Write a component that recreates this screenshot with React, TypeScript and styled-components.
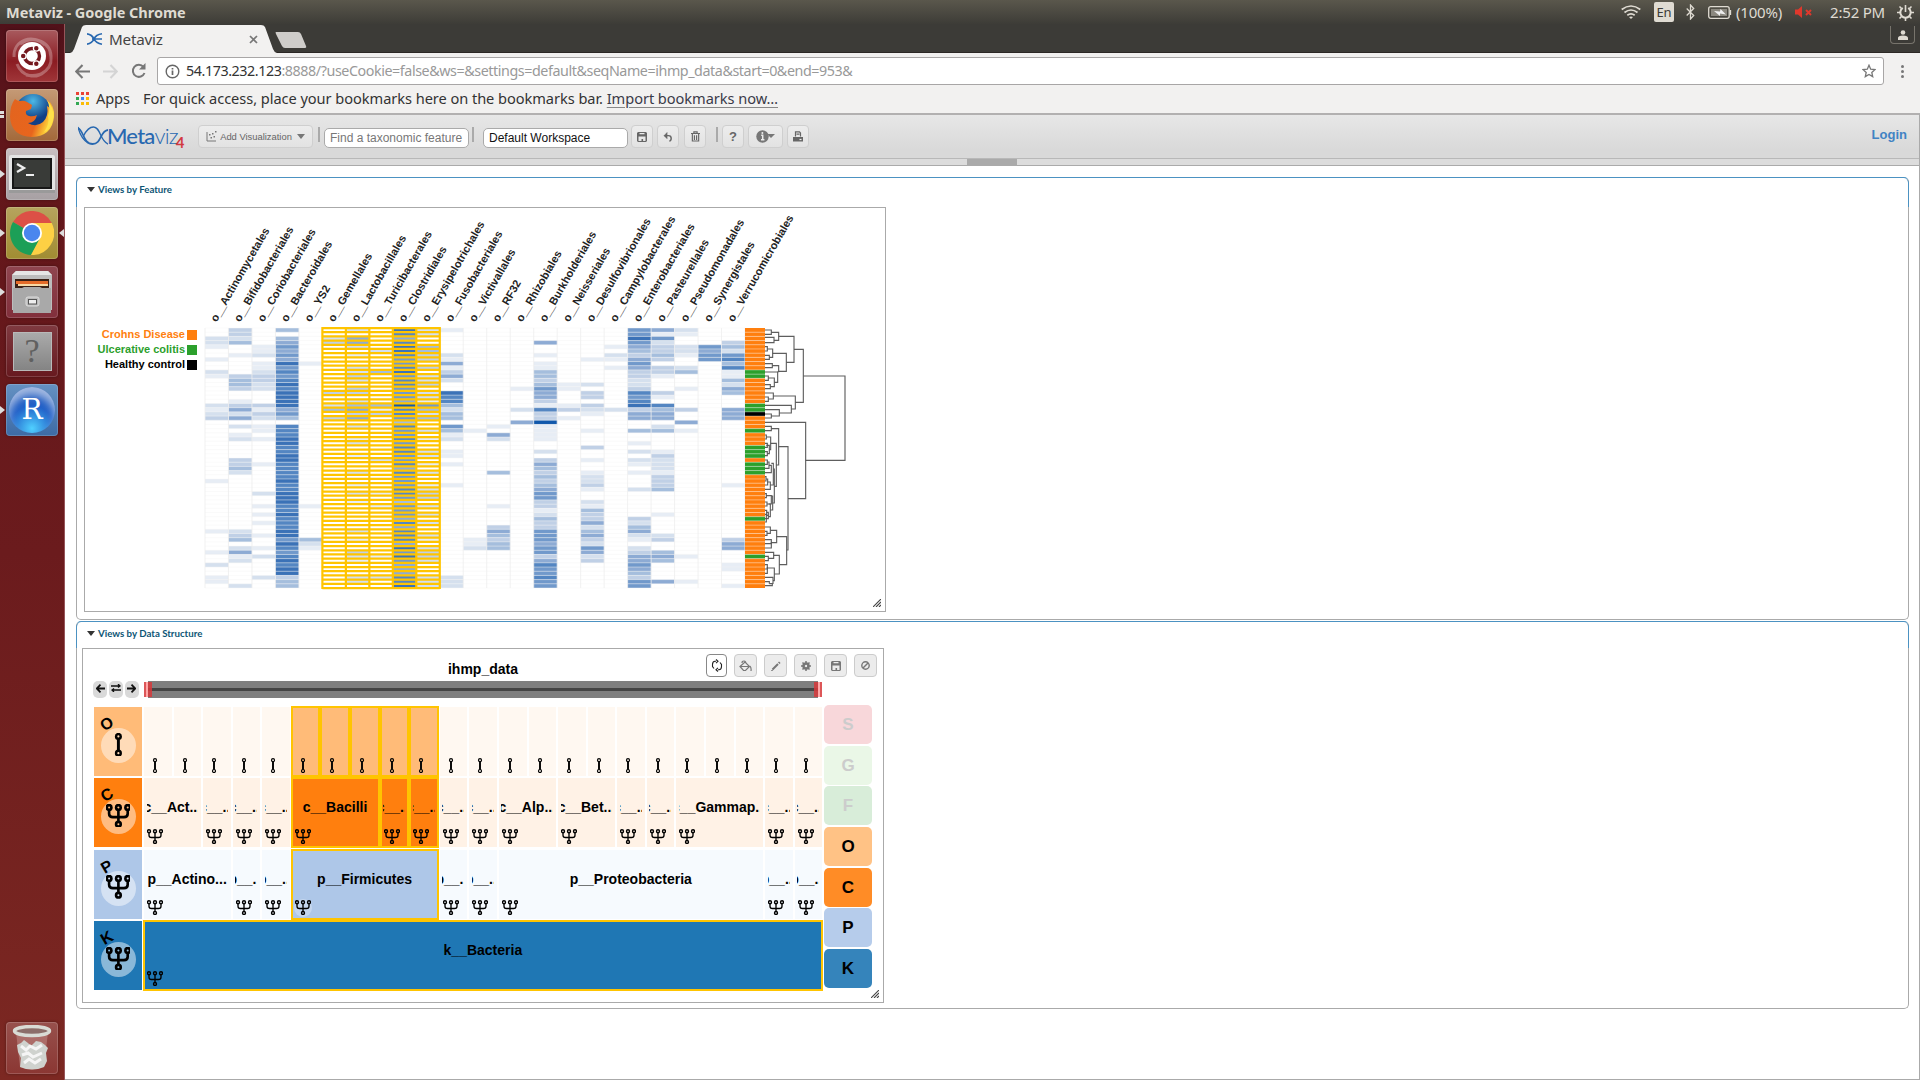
import React from "react";
import styled, { createGlobalStyle, css } from "styled-components";

const Global = createGlobalStyle`
  *{box-sizing:border-box}
  html,body{margin:0;padding:0;background:#fff;overflow:hidden}
  body{font-family:"Liberation Sans",Arial,sans-serif;color:#000}
  svg{display:block;flex:none}
`;
const ubuntu = `"Noto Sans","Open Sans",sans-serif`;

const Screen = styled.div`
  width:1920px;height:1080px;display:grid;grid-template-rows:24px 1fr;overflow:hidden;
`;
const SystemBar = styled.header`
  display:flex;align-items:center;justify-content:space-between;padding:0 6px;
  background:linear-gradient(#5a574c,#3d3c37);color:#dfdbd2;font-family:${ubuntu};
`;
const WindowTitle = styled.span`font-size:14.5px;font-weight:700;letter-spacing:-.04px;line-height:24px;`;
const Indicators = styled.div`display:flex;align-items:center;height:24px;font-size:15px;letter-spacing:-.2px;`;
const Indicator = styled.span<{ $gap: number }>`display:flex;align-items:center;margin-left:${(p) => p.$gap}px;white-space:nowrap;`;
const Lang = styled.span`
  width:20px;height:20px;border-radius:2px;background:#dfdbd2;color:#3c3b37;margin-left:13px;
  display:flex;align-items:center;justify-content:center;font-size:13px;
`;
const Desktop = styled.div`display:grid;grid-template-columns:65px 1fr;min-height:0;`;
const Launcher = styled.aside`
  display:flex;flex-direction:column;gap:7px;padding:6px 0 6px 6px;border-right:1px solid #96555a;
  background:linear-gradient(#51111a,#62161a 12%,#6b1b1d 50%,#7c2822 100%);
`;
const Tile = styled.div<{ $bg: string; $last?: boolean }>`
  position:relative;width:52px;height:52px;flex:none;border-radius:4px;display:flex;align-items:center;justify-content:center;
  background:${(p) => p.$bg};box-shadow:inset 0 0 0 1px rgba(255,255,255,.17),0 0 3px rgba(0,0,0,.35);
  margin-top:${(p) => (p.$last ? "auto" : "0")};
`;
const Pip = styled.i<{ $right?: boolean }>`
  position:absolute;top:22px;width:0;height:0;border:4px solid transparent;
  ${(p) => (p.$right ? css`right:-6px;border-left:0;border-right:5px solid #ddd;` : css`left:-6px;border-right:0;border-left:5px solid #ddd;`)}
`;
const DoublePip = styled.i`position:absolute;left:-6px;top:22px;width:4px;height:7px;border:solid #ddd;border-width:3px 0;`;

const Browser = styled.main`display:grid;grid-template-rows:29px 32px 28px 1fr;min-width:0;min-height:0;`;
const TabStrip = styled.div`
  background:#3c3b37;border-bottom:1px solid #2c2825;display:flex;justify-content:space-between;padding-right:5px;
`;
const TabArt = styled.div`display:grid;height:29px;width:250px;& > *{grid-area:1/1}`;
const TabLabel = styled.div`
  display:flex;align-items:center;padding:1px 57px 0 22px;height:29px;font:15.2px/28px ${ubuntu};color:#444;letter-spacing:-.2px;
  & > span{flex:1;margin-left:6px}
`;
const Profile = styled.div`
  width:25px;height:18px;margin-top:2px;border:1px solid #77746c;border-top:0;border-radius:0 0 4px 4px;display:flex;align-items:center;justify-content:center;
`;
const NavBar = styled.div`background:#f2f1f0;display:flex;align-items:center;padding-left:10px;padding-top:4px;`;
const NavIcons = styled.div`display:flex;align-items:center;gap:13px;width:82px;`;
const Omnibox = styled.div`
  flex:1;height:28px;background:#fff;border:1px solid #a8a6a6;border-radius:3px;display:flex;align-items:center;padding:0 7px 0 7px;
  font:14.3px/26px ${ubuntu};color:#999;& > span{flex:1;margin-left:6px;letter-spacing:-.43px}& b{font-weight:400;color:#333}
`;
const Dots = styled.div`width:36px;display:flex;flex-direction:column;gap:2px;align-items:center;& i{width:3px;height:3px;border-radius:2px;background:#777}`;
const Bookmarks = styled.div`
  background:#f2f1f0;display:flex;align-items:center;padding-left:11px;padding-bottom:2px;font:14.6px/26px ${ubuntu};color:#333;
  & u{text-decoration-color:#888;text-underline-offset:3px;color:#3a3a48}
`;
const BmApps = styled.span`margin-left:7px;letter-spacing:-.1px;width:47px;`;
const BmHint = styled.span`letter-spacing:-.05px;white-space:pre;`;
const AppsGrid = styled.div`display:grid;grid-template-columns:repeat(3,3px);gap:2px;& i{height:3px}`;

const Page = styled.section`
  border:1px solid #aaa;border-top:2px solid #b2b0b0;border-left:0;border-bottom-width:1px;background:#fff;display:flex;flex-direction:column;min-height:0;
`;
const AppBar = styled.div`
  height:44px;flex:none;display:flex;align-items:flex-start;padding:10px 12px 0 13px;
  background:linear-gradient(#e7e7e7,#d9d9d9 80%);border-bottom:1px solid #b8b8b8;
`;
const Gutter = styled.div`
  height:7px;flex:none;background:#dcdcdc;border-bottom:1px solid #aaa;display:flex;padding-left:902px;
  & i{width:50px;height:6px;background:#aaa}
`;
const BarButton = styled.button<{ $w: number; $gap?: number }>`
  width:${(p) => p.$w}px;height:23px;margin:0 0 0 ${(p) => p.$gap || 0}px;padding:0;border:1px solid #cfcfcf;border-radius:4px;
  background:linear-gradient(#ededed,#e2e2e2);color:#666;display:flex;align-items:center;justify-content:center;gap:3px;
  font:9.4px "Liberation Sans",Arial,sans-serif;flex:none;white-space:nowrap;
`;
const Caret = styled.svg`margin-left:2px;`;
const Sep = styled.i<{ $gap: number }>`width:2px;height:15px;background:#aaa;margin:2px 0 0 ${(p) => p.$gap}px;flex:none;`;
const Field = styled.div<{ $gap: number; $hint?: boolean }>`
  width:145px;height:20px;margin:3px 0 0 ${(p) => p.$gap}px;border:1px solid #aaa;border-radius:5px;background:#fff;flex:none;
  font-size:12px;line-height:18px;padding-left:5px;color:${(p) => (p.$hint ? "#777" : "#111")};white-space:nowrap;overflow:hidden;
`;
const Login = styled.a`margin-left:auto;font-size:13px;font-weight:700;color:#4183c4;line-height:20px;`;
const Logo = styled.div`display:flex;width:120px;height:26px;align-items:flex-start;color:#2868b0;`;
const LogoText = styled.span`
  font:500 22px/22px Lato,sans-serif;letter-spacing:-.8px;margin-left:-1px;
  & em{font-style:normal;font-weight:300}
`;
const LogoFour = styled.span`color:#d23940;font:700 15px/16px Lato,sans-serif;margin:9px 0 0 -2px;`;

const Panels = styled.div`padding:11px 10px 0 11px;display:flex;flex-direction:column;gap:1px;`;
const Panel = styled.section<{ $h: number; $x: number }>`
  height:${(p) => p.$h}px;border:1px solid #aaa;border-top-color:#4c92c2;border-radius:5px;padding-left:${(p) => p.$x}px;
`;
const PanelHead = styled.h3<{ $h: number; $in: number }>`
  height:${(p) => p.$h}px;margin:0 -1px 0 ${(p) => -p.$in - 1}px;padding-left:10px;border:solid #4c92c2;border-width:0 1px;border-radius:5px 5px 0 0;
  font:700 9.7px/22px Lato,sans-serif;color:#0d5575;display:flex;gap:3px;
  & i{width:0;height:0;border:4px solid transparent;border-top:5px solid #333;border-bottom:0;margin-top:9px}
`;
const ChartBox = styled.div<{ $w: number; $h: number }>`
  position:relative;width:${(p) => p.$w}px;height:${(p) => p.$h}px;border:1px solid #aaa;background:#fff;
`;
const Grip = styled.div`position:absolute;right:4px;bottom:4px;`;

/* ---------- heatmap ---------- */
const ORDERS = ["Actinomycetales", "Bifidobacteriales", "Coriobacteriales", "Bacteroidales", "YS2", "Gemellales", "Lactobacillales", "Turicibacterales", "Clostridiales", "Erysipelotrichales", "Fusobacteriales", "Victivallales", "RF32", "Rhizobiales", "Burkholderiales", "Neisseriales", "Desulfovibrionales", "Campylobacterales", "Enterobacteriales", "Pasteurellales", "Pseudomonadales", "Synergistales", "Verrucomicrobiales"];
const LEVELS = ["#fff", "#e7edf5", "#d5e0ee", "#c0d0e6", "#a5bedd", "#8dabd4", "#7199cb", "#5486c2", "#3b72b7", "#1158ab"];
/* "row:level" pairs for every column; rows that are absent are empty */
const CELLS = [
  "2:2 3:2 4:1 7:1 10:2 11:1 18:2 19:1 20:2 21:3 36:1 48:1 53:1 56:2 59:1 60:1",
  "0:3 1:3 2:2 3:4 6:1 11:3 12:4 13:4 14:3 17:1 18:3 19:5 20:2 21:5 23:2 25:1 26:2 31:3 32:3 33:4 34:2 48:2 49:3 50:4 52:2 53:5 54:1 55:2 61:2",
  "4:1 5:1 6:2 8:1 9:1 10:2 11:3 12:3 13:2 14:2 18:3 19:1 20:3 21:2 23:1 24:1 26:1 32:1 39:2 42:1 44:1 46:1 49:1 52:1 54:2 59:2",
  "0:4 2:4 3:5 4:6 5:5 6:6 7:5 8:8 9:6 10:7 11:6 12:7 13:8 14:7 15:8 16:8 17:8 18:8 19:5 20:6 21:4 23:7 24:7 25:7 26:8 27:8 28:7 29:7 30:8 31:8 32:7 33:7 34:7 35:7 36:8 37:7 38:7 39:8 40:8 41:8 42:7 43:7 44:8 45:7 46:7 47:7 48:8 49:8 50:6 51:8 52:7 53:6 54:7 55:8 56:7 57:8 58:8 59:3 60:4 61:4",
  "8:1 42:1 50:4 51:2 52:1",
  "2:2 3:3 15:3 18:2 19:4 21:3",
  "0:2 2:5 3:5 4:2 6:1 9:2 10:2 11:3 12:2 14:3 15:3 17:2 18:4 19:5 20:3 21:5 23:2 26:1 27:2 30:1 34:2 37:1 39:2 41:1 48:2 50:1 53:3 54:2 55:1 59:2 60:2",
  "5:2 10:4 18:4 19:1 20:3 31:2 39:1 42:1 54:1 59:2",
  "0:8 1:7 2:5 3:7 4:8 5:8 6:7 7:6 8:6 9:7 10:8 11:6 12:7 13:7 14:6 15:6 16:6 17:5 18:9 19:7 20:7 21:6 22:4 23:7 24:6 25:6 26:7 27:6 28:7 29:7 30:6 31:6 32:7 33:5 34:7 35:6 36:6 37:6 38:7 39:7 40:6 41:4 42:6 43:6 44:6 45:5 46:7 47:5 48:7 49:7 50:7 51:5 52:8 53:6 54:8 55:6 56:5 57:5 58:5 59:7 60:7 61:8",
  "0:2 1:2 4:4 5:4 6:3 7:3 9:3 11:2 12:2 13:3 15:2 16:2 17:1 18:6 19:4 20:2 21:4 24:2 26:1 29:2 30:2 32:1 34:2 37:1 38:2 39:3 40:3 42:2 44:2 46:2 49:2 50:1 52:2 53:3 54:3 55:2 59:2 60:2 61:2",
  "0:1 6:2 7:1 8:5 9:1 10:3 11:5 12:2 15:8 16:7 17:7 18:4 19:2 20:4 21:4 23:6 24:4 25:1 26:2 29:1 30:1 32:1 37:1 59:2 60:2 61:2",
  "24:1 50:1 51:1 52:2",
  "23:1 25:5 26:2 34:4 42:1 47:3 48:5 49:4 50:3 51:4 52:4",
  "14:1 19:2 22:5",
  "3:5 6:1 8:1 9:1 10:4 11:4 12:3 13:4 14:6 15:5 16:5 17:3 18:1 19:7 20:3 21:3 22:9 23:1 24:1 25:1 26:1 29:2 31:3 32:5 33:4 34:3 35:4 36:3 37:4 38:5 39:6 40:6 41:3 42:3 43:1 44:2 45:4 46:3 47:3 48:6 49:6 50:6 51:5 52:6 53:6 54:3 55:5 56:7 57:6 58:6 59:7 60:6 61:6",
  "13:1 14:1 18:1 19:3 21:1",
  "7:1 13:2 15:3 16:3 18:3 19:2 20:1 24:1 28:3 31:1 34:1 35:2 36:2 37:3 38:1 41:2 42:1 43:4 44:3 45:3 46:5 47:2 48:4 49:5 50:3 51:2 52:6 53:5 54:2 55:3",
  "4:1 6:2 7:1 9:1 19:2",
  "0:6 1:6 2:8 3:6 4:5 5:4 6:3 7:5 8:6 9:5 10:3 11:3 12:2 13:2 14:3 15:7 16:6 17:7 18:8 19:3 20:5 21:5 24:4 27:1 29:2 31:2 32:1 34:1 38:2 45:3 46:2 47:4 48:5 49:2 50:1 52:2 53:3 54:5 55:5 56:6 57:5 58:4 59:3 60:6 61:6",
  "0:5 1:1 2:6 3:2 4:3 5:3 6:4 7:3 9:3 10:3 11:1 15:3 16:1 18:7 19:4 20:5 21:5 23:2 24:4 29:1 30:3 31:2 32:2 33:2 34:1 35:3 36:3 37:3 38:4 44:1 49:2 50:3 53:4 54:5 55:4 60:5",
  "0:2 1:1 4:2 5:2 6:1 9:2 10:4 14:1 19:3 22:5 24:1 54:1 60:1",
  "4:6 5:5 6:6 7:6",
  "3:3 4:4 5:2 6:6 7:7 8:4 9:7 10:1 11:1 12:4 13:2 14:5 15:4 19:5 20:5 21:5 37:1 50:3 51:5 52:5 56:1 57:1 61:1",
];
const GREEN_ROWS = [10, 11, 18, 19, 24, 28, 29, 30, 32, 33, 34, 45, 54];
const CW = 540 / 23;
const RH = 260 / 62;
/* dendrogram brackets: x of upper child, y, x of lower child, y, x of join (thirds of a pixel) */
const JOINS = [
  [915, 30, 915, 43, 934], [915, 52, 915, 68, 942], [934, 37, 942, 61, 956], [915, 80, 915, 93, 922], [915, 106, 915, 118, 928], [922, 87, 928, 112, 938],
  [915, 131, 915, 143, 937], [915, 194, 915, 206, 931], [915, 168, 915, 181, 925], [925, 174, 931, 200, 943], [915, 156, 943, 187, 953], [937, 137, 953, 155, 956],
  [938, 100, 956, 154, 979], [956, 49, 979, 127, 1002], [915, 231, 915, 244, 925], [915, 219, 925, 237, 940], [915, 282, 915, 294, 934], [915, 269, 934, 288, 958],
  [915, 256, 958, 279, 994], [940, 228, 994, 267, 1006], [1002, 88, 1006, 247, 1030], [915, 319, 915, 332, 934], [915, 345, 915, 357, 919], [915, 370, 915, 382, 922],
  [915, 395, 915, 407, 922], [919, 376, 922, 401, 928], [919, 351, 928, 389, 932], [915, 420, 915, 433, 922], [922, 426, 915, 445, 927], [927, 436, 915, 458, 934],
  [915, 470, 915, 483, 918], [918, 477, 915, 495, 923], [923, 486, 915, 508, 931], [934, 430, 931, 495, 940], [915, 521, 915, 533, 919], [919, 527, 926, 552, 934],
  [915, 546, 915, 558, 921], [915, 571, 915, 583, 920], [920, 577, 915, 596, 925], [925, 586, 915, 606, 919], [921, 552, 925, 590, 931], [934, 528, 931, 570, 938],
  [940, 447, 938, 549, 943], [932, 370, 943, 499, 949], [934, 326, 949, 435, 956], [915, 634, 915, 646, 921], [915, 621, 921, 640, 931], [915, 659, 915, 671, 934],
  [915, 684, 934, 665, 934], [931, 631, 934, 668, 950], [915, 709, 915, 722, 925], [915, 697, 925, 715, 941], [915, 734, 915, 747, 922], [922, 741, 915, 760, 922],
  [915, 785, 928, 791, 928], [915, 797, 928, 791, 937], [915, 772, 937, 790, 939], [922, 744, 939, 782, 943], [941, 706, 943, 762, 958], [950, 650, 958, 734, 980],
  [956, 380, 980, 690, 984], [915, 307, 984, 536, 1037], [1030, 168, 1037, 421, 1155],
];
const Heatmap = () => (
  <svg width="799" height="402" viewBox="85 208 799 402">
    <g fontWeight="700" fontSize="11" fill="#222">
      {ORDERS.map((n, i) => (
        <text key={n} transform={`translate(${216.6 + i * 23.49} 322.5) rotate(-60)`}>o__{n}</text>
      ))}
    </g>
    <g fontWeight="700" fontSize="11" textAnchor="end">
      <text x="185" y="338" fill="#ff7f0e">Crohns Disease</text>
      <text x="185" y="353" fill="#2ca02c">Ulcerative colitis</text>
      <text x="185" y="368">Healthy control</text>
      <path d="M187 330h10v10h-10z" fill="#ff7f0e" />
      <path d="M187 345h10v10h-10z" fill="#2ca02c" />
      <path d="M187 360h10v10h-10z" />
    </g>
    <g transform="translate(205 328)">
      {CELLS.map((c, i) =>
        c.split(" ").map((pair) => {
          const [r, l] = pair.split(":").map(Number);
          return <rect key={i + "-" + r} x={i * CW} y={r * RH} width={CW} height={RH} fill={LEVELS[l]} />;
        })
      )}
      {Array.from({ length: 63 }, (_, r) => (
        <path key={r} d={`M0 ${r * RH}H540`} stroke="#f4f4f4" strokeWidth=".9" strokeOpacity=".5" />
      ))}
      {Array.from({ length: 24 }, (_, c) => (
        <path key={c} d={`M${c * CW} 0V260`} stroke="#eee" strokeWidth="1" strokeOpacity=".8" />
      ))}
      {Array.from({ length: 63 }, (_, r) => (
        <path key={r} d={`M${5 * CW} ${r * RH}h${CW * 5}`} stroke="#ffc400" strokeWidth="2.25" />
      ))}
      {Array.from({ length: 6 }, (_, c) => (
        <path key={c} d={`M${(5 + c) * CW} -1V261`} stroke="#ffc400" strokeWidth="2.2" />
      ))}
      {Array.from({ length: 62 }, (_, r) => (
        <rect key={r} x="540" y={r * RH} width="20" height={RH} fill={r === 20 ? "#000" : GREEN_ROWS.includes(r) ? "#2ca02c" : "#ff7f0e"} />
      ))}
      {Array.from({ length: 61 }, (_, r) => (
        <path key={r} d={`M540 ${(r + 1) * RH}h20`} stroke="#fff" strokeWidth=".8" strokeOpacity=".45" />
      ))}
    </g>
    <g transform="translate(460 320) scale(.33333)" fill="none" stroke="#555" strokeWidth="3.4" strokeOpacity=".95">
      {JOINS.map(([a, y, b, z, x], i) => (
        <path key={i} d={`M${a} ${y}H${x}V${z}H${b}`} />
      ))}
    </g>
  </svg>
);
const GripMark = () => (
  <Grip>
    <svg width="8" height="8" viewBox="0 0 8 8" stroke="#444" strokeWidth="1.1"><path d="M0 8L8 0M3 8L8 3M6 8L8 6" /></svg>
  </Grip>
);

/* ---------- icicle ---------- */
const View = styled.div`display:grid;grid-template:32px 24px 285px/52px 678px 50px;padding-left:9px;`;
const ViewTitle = styled.h4`grid-area:1/2;margin:0;font-size:14px;line-height:41px;text-align:center;`;
const Tools = styled.div`grid-area:1/1/2/4;display:flex;gap:7px;justify-content:flex-end;padding:5px 0 0;margin-right:-5px;`;
const Tool = styled.button<{ $on?: boolean }>`
  width:${(p) => (p.$on ? 21 : 23)}px;height:23px;padding:0;border:1px solid ${(p) => (p.$on ? "#888" : "#ccc")};border-radius:4px;
  background:${(p) => (p.$on ? "#fff" : "#ececec")};color:${(p) => (p.$on ? "#222" : "#777")};display:flex;align-items:center;justify-content:center;
`;
const NavKeys = styled.div`grid-area:2/1;display:flex;gap:1.5px;padding-left:1px;`;
const Key = styled.span`width:14.4px;height:17px;flex:none;border-radius:5px;background:#d9d9d9;display:flex;align-items:center;justify-content:center;padding-bottom:3px;`;
const Range = styled.div`
  grid-area:2/2;height:17px;margin:0 4px;background:#7f7f7f;display:flex;align-items:center;justify-content:space-between;
  & > b{flex:1;height:3px;background:#444}
`;
const Knob = styled.i<{ $r?: boolean }>`
  width:8px;height:15px;margin:0 -4px;z-index:1;opacity:.85;background:#f99;border:solid #d8393c;
  border-width:${(p) => (p.$r ? "0 2px 0 4px" : "0 4px 0 2px")};
`;
const Icicle = styled.div`
  grid-area:3/1/4/3;display:grid;grid-template-columns:48px 678.3px;grid-template-rows:repeat(4,69px);gap:2.3px 2px;padding:2px 0 0 2px;
`;
const LevelCell = styled.div<{ $bg: string }>`background:${(p) => p.$bg};display:grid;& > *{grid-area:1/1}`;
const LevelLetter = styled.span`font:700 16px/16px "Liberation Sans",Arial,sans-serif;transform:rotate(-30deg);width:16px;height:16px;text-align:center;margin:9px 0 0 5px;`;
const Halo = styled.span`width:35px;height:35px;border-radius:50%;background:rgba(255,255,255,.48);margin:21px 0 0 6.5px;display:flex;align-items:center;justify-content:center;padding-bottom:2px;`;
const Track = styled.div`display:grid;grid-template-columns:repeat(23,minmax(0,1fr));column-gap:2px;`;
const Node = styled.div<{ $bg: string; $span: number; $on?: boolean }>`
  grid-column:span ${(p) => p.$span};background:${(p) => p.$bg};height:69px;display:flex;flex-direction:column;justify-content:flex-end;min-width:0;
  ${(p) => p.$on && css`outline:2px solid #ffc400;outline-offset:-1px;z-index:1;`}
`;
const NodeLabel = styled.span`
  margin:0 3px 11px 2.5px;display:flex;justify-content:center;overflow:hidden;white-space:nowrap;font-weight:700;font-size:14px;line-height:18px;
`;
const NodeIcon = styled.span<{ $halo?: boolean }>`
  width:18px;height:18px;border-radius:9px;margin:0 0 2px 2px;display:flex;align-items:center;justify-content:center;
  background:${(p) => (p.$halo ? "rgba(255,255,255,.28)" : "none")};
`;
const Ranks = styled.div`grid-area:3/3;display:grid;grid-auto-rows:39px;gap:1.7px;width:48px;margin-left:2px;`;
const Rank = styled.span<{ $bg: string; $off?: boolean }>`
  border-radius:5px;background:${(p) => p.$bg};color:${(p) => (p.$off ? "#ccc" : "#000")};font-weight:700;font-size:17px;display:flex;align-items:center;justify-content:center;padding-top:1px;
`;

const Tree = ({ s = 1 }: { s?: number }) => (
  <svg width={16 * s} height={15 * s} viewBox="-8 -7.5 16 15" fill="none" stroke="#000" strokeWidth={s > 1 ? 1.7 : 1.35}>
    <circle cx="-6" cy="-5.3" r="1.5" /><circle cx="0" cy="-5.3" r="1.5" /><circle cx="6" cy="-5.3" r="1.5" /><circle cx="0" cy="5.5" r="1.5" />
    <path d="M-6-3.8v2.6Q-6 1-3.6 1H3.6Q6 1 6-1.2v-2.6M0-3.8V4" />
  </svg>
);
const Leaf = ({ s = 1 }: { s?: number }) => (
  <svg width={16 * s} height={15 * s} viewBox="-8 -7.5 16 15" fill="none" stroke="#000" strokeWidth={s > 1 ? 1.6 : 1.2}>
    <circle cx="0" cy="-5.3" r="1.5" /><circle cx="0" cy="5.5" r="1.5" /><path d="M0-3.8V4" strokeWidth="1.9" />
  </svg>
);
type N = { t?: string; n: number; on?: boolean };
const one = (p: string, k: number, on?: boolean): N[] => Array.from({ length: k }, () => ({ t: p, n: 1, on }));
const ROWS: { l: string; bg: string; dim: string; nodes: N[] }[] = [
  { l: "O", bg: "#ffbb78", dim: "#fff8f1", nodes: Array.from({ length: 23 }, (_, i) => ({ n: 1, on: i > 4 && i < 10 })) },
  { l: "C", bg: "#ff7f0e", dim: "#fff2e6", nodes: [{ t: "c__Act...", n: 2 }, ...one("c__...", 3), { t: "c__Bacilli", n: 3, on: true }, ...one("c__...", 2, true), ...one("c__...", 2), { t: "c__Alp...", n: 2 }, { t: "c__Bet...", n: 2 }, ...one("c__...", 2), { t: "c__Gammap...", n: 3 }, ...one("c__...", 2)] },
  { l: "P", bg: "#aec7e8", dim: "#f6fafe", nodes: [{ t: "p__Actino...", n: 3 }, ...one("p__...", 2), { t: "p__Firmicutes", n: 5, on: true }, ...one("p__...", 2), { t: "p__Proteobacteria", n: 9 }, ...one("p__...", 2)] },
  { l: "K", bg: "#1f77b4", dim: "#1f77b4", nodes: [{ t: "k__Bacteria", n: 23, on: true }] },
];
const RANKS: [string, string, boolean][] = [["S", "#f8d7da", true], ["G", "#eaf7e7", true], ["F", "#d8edd9", true], ["O", "#ffc285", false], ["C", "#ff8c26", false], ["P", "#b6cceb", false], ["K", "#3584bb", false]];

/* ---------- small glyphs ---------- */
const Floppy = () => <svg width="10" height="10" viewBox="0 0 10 10" fill="currentColor"><path fillRule="evenodd" d="M1 0h8l1 1v8l-1 1H1L0 9V1zM1.5 4.5V9h3V7h1.600v2h2.400V4.500zM2.500 1v1.200h5V1z" /></svg>;
const Undo = () => <svg width="10" height="10" viewBox="0 0 11 11" fill="none" stroke="currentColor" strokeWidth="1.6"><path d="M1.5 4H6q3 0 3 3t-2 3" /><path d="M4.5.6L1.2 4l3.3 3.3z" fill="currentColor" strokeWidth=".6" /></svg>;
const Trash = () => <svg width="9" height="11" viewBox="0 0 10 12" fill="none" stroke="currentColor" strokeWidth="1.3"><path d="M0 2.7h10M3.2 2.3V.8h3.6v1.5M1.5 3v8h7V3M3.8 4.5V10M6.2 4.5V10" /></svg>;
const Info = () => <svg width="20" height="13" viewBox="0 0 20 13"><circle cx="6.5" cy="6.5" r="6.2" fill="#777" /><path d="M5.200 5.300h1.500v4.200M5 9.700h3.400" stroke="#eee" strokeWidth="1.500" fill="none" /><circle cx="6.400" cy="3" r="1" fill="#eee" /><path d="M11 4h8l-4 4z" fill="#777" /></svg>;
const Printer = () => <svg width="10" height="11" viewBox="0 0 10 11" fill="none" stroke="currentColor" strokeWidth="1.2"><path d="M2.5 5.5V.8h4l1 1.2v3.500M3.500 3.200h3" /><path d="M0 6h10v4.500H0z" fill="currentColor" stroke="none" /><path d="M6.500 8.500h2" stroke="#eee" /></svg>;
const Scatter = () => <svg width="11" height="11" viewBox="0 0 11 11" fill="#777"><path d="M1 1v9h9" fill="none" stroke="#777" /><path d="M3 3h1.5v1.5H3zM6 2h1.5v1.5H6zM4.5 6H6v1.5H4.5zM7.5 5H9v1.5H7.5zM9 0h1.5v1.5H9z" /></svg>;
const Refresh = () => <svg width="12" height="13" viewBox="0 0 12 12" fill="none" stroke="currentColor" strokeWidth="1.1"><path d="M5 1.8H4Q1.5 2 1.5 5v2L3 9M7 10.2h1Q10.500 10 10.500 7V5L9 3M5 0l2 1.800L5 3.600M7 8.400L5 10.200 7 12" /></svg>;
const Bucket = () => <svg width="13" height="12" viewBox="0 0 13 12" fill="none" stroke="currentColor" strokeWidth="1.200"><path d="M1 6.500L6 2l4.500 4.500-4 4h-2zM1.500 6.500h8.500M3 3q0-2 2-2t2 3M11 6q1.500 2 1 5" /></svg>;
const Pencil = () => <svg width="10" height="10" viewBox="0 0 10 10" stroke="currentColor"><path d="M1.500 8.500L7 3" strokeWidth="2" /><path d="M7.800 2.200l1-1" strokeWidth="2.200" /><path d="M0 10l2-1" /></svg>;
const Gear = () => <svg width="10" height="10" viewBox="0 0 10 10"><path d="M5 0v10M0 5h10M1.500 1.500l7 7M8.500 1.500l-7 7" stroke="currentColor" strokeWidth="1.500" /><circle cx="5" cy="5" r="2.500" fill="#ececec" stroke="currentColor" strokeWidth="2.600" /></svg>;
const Ban = () => <svg width="9" height="9" viewBox="0 0 9 9" fill="none" stroke="currentColor" strokeWidth="1.400"><circle cx="4.500" cy="4.500" r="3.700" /><path d="M2 7l5-5" /></svg>;
const Arrow = ({ flip, c = "#111", s = 9, w = 2 }: { flip?: boolean; c?: string; s?: number; w?: number }) => (
  <svg width={s} height={s} viewBox="0 0 10 10" fill="none" stroke={c} strokeWidth={w}><path d={flip ? "M0 5h9M5 .7L9.200 5 5 9.300" : "M10 5H1M5 .7L.8 5 5 9.300"} /></svg>
);
const Swap = () => <svg width="10" height="8" viewBox="0 0 10 8" stroke="#111" strokeWidth="1.300" fill="none"><path d="M0 2h9M7 0l2 2-2 1.500M10 6H1M3 4.500L1 6l2 2" /></svg>;

/* ---------- launcher icons ---------- */
const UbuntuIcon = () => (
  <svg width="52" height="52" viewBox="0 0 52 52" fill="none">
    <path d="M8 27C7 10 27 3 39 15M44 22C49 38 36 48 20 45M14 14C28 4 46 12 45 29M11 34C16 47 30 49 38 42" stroke="#fff" strokeOpacity=".28" strokeWidth="3" />
    <circle cx="26" cy="26" r="14" fill="#fff" /><circle cx="26" cy="26" r="7.500" stroke="#75181e" strokeWidth="3.400" />
    <g fill="#75181e" stroke="#fff" strokeWidth="1.300"><circle cx="17.200" cy="26" r="2.900" /><circle cx="30.300" cy="18.300" r="2.900" /><circle cx="30.300" cy="33.700" r="2.900" /></g>
  </svg>
);
const FirefoxIcon = () => (
  <svg width="46" height="46" viewBox="0 0 46 46">
    <defs>
      <radialGradient id="ffb" cx=".5" cy=".2"><stop offset="0" stopColor="#4cb8e6" /><stop offset="1" stopColor="#123f86" /></radialGradient>
      <linearGradient id="ffo" x1="0" y1="0" x2="1" y2=".3"><stop offset="0" stopColor="#e2641f" /><stop offset=".7" stopColor="#e8651d" /><stop offset="1" stopColor="#ffd83b" /></linearGradient>
    </defs>
    <circle cx="24" cy="20" r="18" fill="url(#ffb)" />
    <path d="M6 7q2 2 5 2 4-1 7 1l5 3-1 4-5 2q-1 4 3 5 4 1 8-1-2 8-9 8 8 5 15-1 6-6 4-16 3 1 3 4 0-7-3-11 8 7 7 18-2 19-22 20Q2 44 1 25 1 13 6 7z" fill="url(#ffo)" />
    <path d="M38 8q8 8 6 20-3 10-9 12 6-8 4-16 3-8-1-16z" fill="#ffe04a" />
  </svg>
);
const TerminalIcon = () => (
  <svg width="46" height="38" viewBox="0 0 46 38"><rect width="46" height="38" rx="2" fill="#e4e4e4" /><rect y="35" width="46" height="3" fill="#9a9a9a" /><rect x="3" y="3" width="40" height="31" fill="#171717" /><rect x="5" y="5" width="36" height="27" fill="#393b38" /><path d="M8 9l7 4-7 4" stroke="#eee" strokeWidth="2.300" fill="none" /><path d="M17 20h8" stroke="#eee" strokeWidth="2" /></svg>
);
const ChromeIcon = () => (
  <svg width="44" height="44" viewBox="-22 -22 44 44">
    <path d="M0 0L-19-11A22 22 0 0 1 19.700-10H0z" fill="#dc5046" /><path d="M0 0L-19-11A22 22 0 0 0-1 22L9 5z" fill="#1c9f57" /><path d="M0-10H19.700A22 22 0 0 1-1 22L8 5z" fill="#fdd044" />
    <circle r="10" fill="#fff" /><circle r="8.200" fill="#4a86ee" />
  </svg>
);
const FilesIcon = () => (
  <svg width="42" height="44" viewBox="0 0 42 44"><path d="M1 5l4-4h32l4 4v35H1z" fill="#bdbdbd" /><path d="M1 5l4-4h32l4 4z" fill="#e6e6e6" /><path d="M4 9h34v10H4z" fill="#3a2015" /><path d="M5 11h32v3H5z" fill="#e46b29" /><path d="M7 14h30v2H7z" fill="#f8d9a4" /><path d="M2 18h9l2-1h16l2 1h9v25H2z" fill="#a9a9a9" /><rect x="15" y="27" width="13" height="9" rx="2" fill="#bbb" stroke="#ddd" /><rect x="17.500" y="29.500" width="8" height="4.500" fill="#eee" stroke="#555" /></svg>
);
const UnknownMark = styled.span`width:39px;height:39px;background:linear-gradient(#aaa,#848484);border:1px solid #b9b9b9;color:#606060;font:34px/36px "Liberation Serif",serif;text-align:center;`;
const RMark = styled.span`width:46px;height:46px;border-radius:50%;background:radial-gradient(circle at 50% 90%,#50d0ff,#2060c8 48%,#1a4dad);color:#fff;font:28px/45px "DejaVu Serif",serif;text-align:center;box-shadow:inset 0 8px 8px rgba(255,255,255,.6);`;
const TrashCan = () => (
  <svg width="40" height="46" viewBox="0 0 40 46"><path d="M4 7l4 35q12 5 24 0l4-35z" fill="#dcb5b0" fillOpacity=".35" /><path d="M5 20l4-2 3-3 4 3 3 3 5-5 5 1 4 3 3 3-2 5 1 8-3 6q-12 5-24 0l1-9-3-6z" fill="#cfd2ce" /><path d="M9 21l5 4 4-4 6 3 6-4M10 30l6-2 5 4 9-4M12 38l5-4 6 4 6-4" stroke="#f5f5f5" strokeWidth="3" fill="none" /><ellipse cx="20" cy="6" rx="17.500" ry="4.500" fill="#8c6d69" stroke="#d9dbd5" strokeWidth="3.500" /></svg>
);

export default function App() {
  return (
    <Screen>
      <Global />
      <SystemBar>
        <WindowTitle>Metaviz - Google Chrome</WindowTitle>
        <Indicators>
          <svg width="20" height="14" viewBox="0 0 20 14" fill="none" stroke="#dfdbd2" strokeWidth="1.700"><path d="M.7 4.500Q10-2.500 19.300 4.500M3.500 7.500q6.500-5 13 0M6.300 10.200q3.700-2.700 7.400 0" /><path d="M8 12l2 2 2-2q-2-1-4 0z" fill="#dfdbd2" stroke="none" /></svg>
          <Lang>En</Lang>
          <Indicator $gap={12}><svg width="9" height="16" viewBox="0 0 9 16" fill="none" stroke="#dfdbd2" strokeWidth="1.300"><path d="M.7 4.500l7 7L4.500 15V1l3.200 3.500-7 7" /></svg></Indicator>
          <Indicator $gap={13}><svg width="24" height="13" viewBox="0 0 24 13" fill="none" stroke="#dfdbd2" strokeWidth="1.300"><rect x=".7" y=".7" width="20.500" height="11.600" rx="2" /><path d="M22.500 4v5" /><path d="M3 3h16v7H3z" fill="#8b887f" stroke="none" /><path d="M6 5l6 .5L12.500 3 18 8.500l-6-1L12 10z" fill="#eee" stroke="none" /></svg></Indicator>
          <Indicator $gap={4}>(100%)</Indicator>
          <Indicator $gap={13}><svg width="17" height="12" viewBox="0 0 17 12"><path d="M0 3.500h3L7 0v12L3 8.500H0z" fill="#df382c" /><path d="M11 4l5 5M16 4l-5 5" stroke="#df382c" strokeWidth="2" /></svg></Indicator>
          <Indicator $gap={18}>2:52 PM</Indicator>
          <Indicator $gap={12}><svg width="17" height="17" viewBox="0 0 17 17" fill="none" stroke="#dfdbd2"><path d="M5.800 4a5.200 5.200 0 1 0 5.400 0" strokeWidth="2" /><path d="M8.500 1v7M0 8.500h3M14 8.500h3M8.500 14v3M2.500 2.500l2 2M14.500 2.500l-2 2M2.500 14.500l2-2M14.500 14.500l-2-2" strokeWidth="1.600" /></svg></Indicator>
        </Indicators>
      </SystemBar>
      <Desktop>
        <Launcher>
          <Tile $bg="linear-gradient(#a85a5e,#8b1c22 60%,#a03639)"><UbuntuIcon /></Tile>
          <Tile $bg="linear-gradient(#c59a76,#a3693a)"><DoublePip /><FirefoxIcon /></Tile>
          <Tile $bg="linear-gradient(#c9c0c2,#a7a0a3)"><Pip /><TerminalIcon /></Tile>
          <Tile $bg="linear-gradient(#b6a45e,#a18c32)"><Pip /><Pip $right /><ChromeIcon /></Tile>
          <Tile $bg="linear-gradient(#8f454f,#812f3b)"><Pip /><FilesIcon /></Tile>
          <Tile $bg="linear-gradient(#7f3a40,#67191f)"><UnknownMark>?</UnknownMark></Tile>
          <Tile $bg="linear-gradient(#6591c2,#3d6ba5)"><Pip /><RMark>R</RMark></Tile>
          <Tile $bg="linear-gradient(#97514d,#8b3733)" $last><TrashCan /></Tile>
        </Launcher>
        <Browser>
          <TabStrip>
            <TabArt>
              <svg width="250" height="29" viewBox="0 0 250 29"><path d="M5 29Q8 28 9 25L17 3Q18 1 21 1H196Q199 1 200 3L208 25Q209 28 212 29z" fill="#f2f1f0" /><path d="M211 8h22q2 0 3 2l5 12q1 2-2 2h-19q-2 0-3-2l-6-12q-1-2 0-2z" fill="#cfcdca" /></svg>
              <TabLabel>
                <svg width="16" height="12" viewBox="0 0 16 14" preserveAspectRatio="none" fill="none" stroke="#2868b0" strokeWidth="1.800"><path d="M0 1q5 1 7 6t8 6M0 13q5-1 7-6t8-6M5 7h10" /></svg>
                <span>Metaviz</span>
                <svg width="9" height="9" viewBox="0 0 9 9" stroke="#777" strokeWidth="1.700"><path d="M1 1l7 7M8 1L1 8" /></svg>
              </TabLabel>
            </TabArt>
            <Profile><svg width="10" height="10" viewBox="0 0 10 10" fill="#dfdbd2"><circle cx="5" cy="2.500" r="2.300" /><path d="M0 10V8q0-2.500 5-2.500T10 8v2z" /></svg></Profile>
          </TabStrip>
          <NavBar>
            <NavIcons>
              <Arrow c="#777" s={15} w={1.4} /><Arrow flip c="#d4d4d4" s={15} w={1.4} />
              <svg width="16" height="16" viewBox="0 0 16 16" fill="none" stroke="#777" strokeWidth="2"><path d="M13.500 10A6 6 0 1 1 12.500 4" /><path d="M14.500 0v6.500H8z" fill="#777" stroke="none" /></svg>
            </NavIcons>
            <Omnibox>
              <svg width="15" height="15" viewBox="0 0 15 15" fill="none" stroke="#666" strokeWidth="1.400"><circle cx="7.500" cy="7.500" r="6.300" /><path d="M7.500 6.500V11M7.500 4v1.500" strokeWidth="1.700" /></svg>
              <span><b>54.173.232.123</b>:8888/?useCookie=false&amp;ws=&amp;settings=default&amp;seqName=ihmp_data&amp;start=0&amp;end=953&amp;</span>
              <svg width="14" height="14" viewBox="0 0 14 14" fill="none" stroke="#777" strokeWidth="1.300"><path d="M7 1.200l1.700 4 4.300.4-3.200 2.800.9 4.200L7 10.400l-3.700 2.200.9-4.200L1 5.600l4.300-.4z" /></svg>
            </Omnibox>
            <Dots><i /><i /><i /></Dots>
          </NavBar>
          <Bookmarks>
            <AppsGrid>{["#ea4335", "#ea4335", "#ea4335", "#34a853", "#4285f4", "#fbbc05", "#34a853", "#fbbc05", "#fbbc05"].map((c, i) => <i key={i} style={{ background: c }} />)}</AppsGrid>
            <BmApps>Apps</BmApps>
            <BmHint>For quick access, place your bookmarks here on the bookmarks bar. <u>Import bookmarks now…</u></BmHint>
          </Bookmarks>
          <Page>
            <AppBar>
              <Logo>
                <svg width="30" height="24" viewBox="0 0 33 24" preserveAspectRatio="none" fill="none" stroke="#2868b0"><path d="M0 3C6 5 6 19 16 19S24 6 33 5" strokeWidth="1.800" /><path d="M6 11Q11 2 17 2C25 2 24 16 33 19" strokeWidth="1.500" /><path d="M0 2C2 10 6 15 11 18" strokeWidth="1.300" /></svg>
                <LogoText>Meta<em>viz</em></LogoText><LogoFour>4</LogoFour>
              </Logo>
              <BarButton $w={115}><Scatter />Add Visualization<Caret width="8" height="5" viewBox="0 0 8 5" fill="#777"><path d="M0 0h8L4 5z" /></Caret></BarButton>
              <Sep $gap={5} /><Field $gap={4} $hint>Find a taxonomic feature</Field><Sep $gap={3} /><Field $gap={9}>Default Workspace</Field>
              <BarButton $w={22} $gap={3}><Floppy /></BarButton><BarButton $w={22} $gap={4}><Undo /></BarButton><BarButton $w={22} $gap={5}><Trash /></BarButton>
              <Sep $gap={10} />
              <BarButton $w={22} $gap={4}><b style={{ fontSize: 13 }}>?</b></BarButton><BarButton $w={35} $gap={4}><Info /></BarButton><BarButton $w={22} $gap={4}><Printer /></BarButton>
              <Login>Login</Login>
            </AppBar>
            <Gutter><i /></Gutter>
            <Panels>
              <Panel $h={443} $x={7}>
                <PanelHead $h={29} $in={7}><i />Views by Feature</PanelHead>
                <ChartBox $w={802} $h={405}><Heatmap /><GripMark /></ChartBox>
              </Panel>
              <Panel $h={388} $x={5}>
                <PanelHead $h={26} $in={5}><i />Views by Data Structure</PanelHead>
                <ChartBox $w={802} $h={355}>
                  <View>
                    <ViewTitle>ihmp_data</ViewTitle>
                    <Tools><Tool $on><Refresh /></Tool><Tool><Bucket /></Tool><Tool><Pencil /></Tool><Tool><Gear /></Tool><Tool><Floppy /></Tool><Tool><Ban /></Tool></Tools>
                    <NavKeys><Key><Arrow /></Key><Key><Swap /></Key><Key><Arrow flip /></Key></NavKeys>
                    <Range><Knob /><b /><Knob $r /></Range>
                    <Icicle>
                      {ROWS.map((r) => (
                        <React.Fragment key={r.l}>
                          <LevelCell $bg={r.bg}><Halo>{r.l === "O" ? <Leaf s={1.55} /> : <Tree s={1.55} />}</Halo><LevelLetter>{r.l}</LevelLetter></LevelCell>
                          <Track>
                            {r.nodes.map((n, i) => (
                              <Node key={i} $span={n.n} $on={n.on} $bg={n.on ? r.bg : r.dim}>
                                {n.t && <NodeLabel><span>{n.t}</span></NodeLabel>}
                                <NodeIcon $halo={n.on && r.l === "P"}>{r.l === "O" ? <Leaf /> : <Tree />}</NodeIcon>
                              </Node>
                            ))}
                          </Track>
                        </React.Fragment>
                      ))}
                    </Icicle>
                    <Ranks>{RANKS.map(([l, c, off]) => <Rank key={l} $bg={c} $off={off}>{l}</Rank>)}</Ranks>
                  </View>
                  <GripMark />
                </ChartBox>
              </Panel>
            </Panels>
          </Page>
        </Browser>
      </Desktop>
    </Screen>
  );
}
